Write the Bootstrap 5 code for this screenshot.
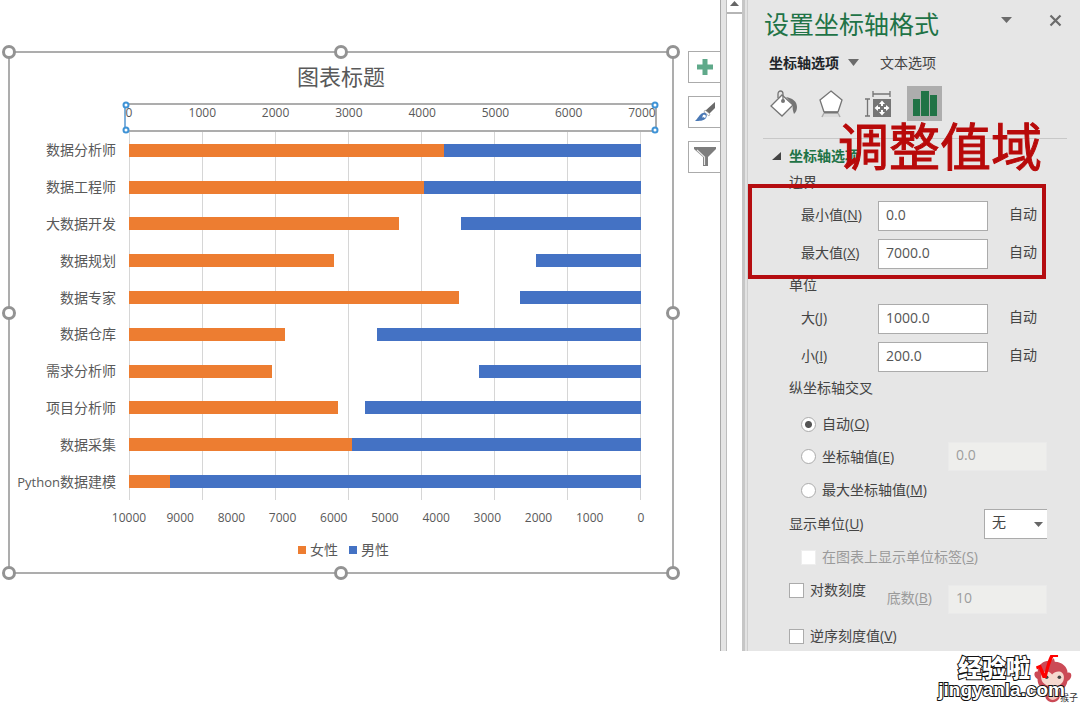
<!DOCTYPE html>
<html lang="zh-CN">
<head>
<meta charset="utf-8">
<meta name="viewport" content="width=device-width, initial-scale=1">
<title>设置坐标轴格式</title>
<link href="https://cdn.jsdelivr.net/npm/bootstrap@5.3.0/dist/css/bootstrap.min.css" rel="stylesheet">
<style>
  body { font-family: "Open Sans", "Noto Sans CJK SC", sans-serif; font-size: 14px; line-height: 20px; color: #444; background: #fff; }
  .workspace { min-height: calc(100vh - 55px); }

  /* chart */
  .sheet { padding: 51px 0 0 8px; gap: 14px; min-width: 0; }
  .chart-frame { border: 2px solid #adadad; padding: 10px 0 13px; color: #595959; }
  .chart-name { font-size: 22px; line-height: 26px; font-weight: 400; margin: 0 0 14px; color: #595959; }
  .grips { inset: -1px; pointer-events: none; }
  .grip { width: 14px; height: 14px; border: 3px solid #939393; border-radius: 50%; background: #fff; }
  .value-axis { margin: 0 15px 0 114px; height: 29px; border: 2px solid #adadad; border-left-color: #7fb0dc; padding: 0 13px 0 3px; }
  .dot { width: 7px; height: 7px; border: 2px solid #3f93d6; border-radius: 50%; background: #fff; }
  .ticks { font-size: 12px; line-height: 16px; }
  .ticks span { width: 0; display: flex; justify-content: center; white-space: nowrap; }
  .plot { display: grid; grid-template-columns: 119px 1fr; grid-template-rows: 368px; padding-right: 31px; }
  .names, .series { display: grid; grid-template-rows: repeat(10, 1fr); align-items: center; }
  .names { padding-right: 13px; text-align: right; white-space: nowrap; }
  .latin { font-size: 13px; }
  .lines, .series { grid-column: 2; grid-row: 1; }
  .lines i { width: 1px; background: #d6d6d6; }
  .bar-a, .bar-b { height: 13px; }
  .bar-a, .key-a { background: #ed7d31; }
  .bar-b, .key-b { background: #4472c4; }
  .lower-axis { margin: 10px 31px 0 119px; }
  .legend-row { margin-top: 15px; gap: 11px; line-height: 18px; padding-left: 5px; }
  .key { width: 8px; height: 8px; }
  .tools { gap: 13px; }
  .tool { width: 32px; height: 32px; border: 1px solid #ababab; border-right: 0; background: #fff; padding: 0; display: flex; align-items: center; justify-content: center; }

  /* splitter and scroll bar */
  .splitter { width: 7px; background: #e4e4e4; border-left: 1px solid #a8a8a8; border-right: 1px solid #bdbdbd; }
  .scroller { width: 15px; background: #fff; }
  .scroll-up { width: 15px; height: 14px; border: 0; border-bottom: 2px solid #b5b5b5; background: #fff; padding: 0; display: flex; justify-content: center; }
  .pane-edge { width: 6px; background: #e2e2e2; border-left: 3px solid #c6c6c6; border-right: 1px solid #cdcdcd; }

  /* format pane */
  .pane { flex: 0 0 332px; background: #e6e6e6; }
  .pane-head { height: 48px; padding: 0 18px 0 16px; gap: 37px; }
  .pane-head h1 { font-size: 25px; line-height: 34px; color: #217346; font-weight: 400; margin: 0; }
  .bare { border: 0; background: none; padding: 0; color: inherit; line-height: 20px; }
  .tabs { padding: 3px 0 0 21px; height: 26px; gap: 9px; }
  .tabs .other { margin-left: 12px; }
  .kinds { padding: 12px 0 0 18px; gap: 12px; }
  .kind { width: 35px; height: 35px; border: 0; padding: 0; background: none; display: flex; align-items: center; justify-content: center; }
  .kind.on { background: #adadad; }
  .rule { height: 1px; background: #c8c8c8; margin: 17px 13px 0 15px; }
  .fold { color: #217346; font-weight: 700; margin: 7px 0 0 24px; gap: 8px; }
  .group-name { margin: 6px 0 0 41px; }
  .pair { display: grid; grid-template-columns: 77px 110px auto; align-items: center; margin-left: 53px; }
  .pair label { padding-bottom: 2px; }
  .pair .bare { margin-left: 21px; padding-bottom: 4px; justify-self: start; }
  .field { width: 110px; height: 30px; border: 1px solid #ababab; border-radius: 0; padding: 0 7px 4px; font-size: 14px; line-height: 20px; color: #555; background: #fff; }
  .field:disabled { width: 99px; height: 29px; border-color: #eaeaea; background: #eeeeec; color: #9d9d9d; }
  .fields { display: grid; row-gap: 8px; margin-top: 9px; }
  .mark-box { left: 0; right: 34px; top: -17px; bottom: -10px; border: 4px solid #b50d10; pointer-events: none; }
  .note { left: 90px; top: -30px; font-size: 51px; line-height: 60px; color: #b80a0a; -webkit-text-stroke: 1px #b80a0a; white-space: nowrap; pointer-events: none; }
  .choice { display: flex; align-items: center; gap: 6px; height: 20px; }
  .choice .form-check-input { width: 15px; height: 15px; margin: 0; border: 1px solid #ababab; background-color: #fff; flex: none; }
  .choice .form-check-input[type=checkbox] { border-radius: 0; }
  .choice .form-check-input[type=radio]:checked { background-image: radial-gradient(circle, #555 0 3px, transparent 4px); }
  .choice .form-check-input:disabled { border-color: #eee; opacity: 1; }
  .choice .form-check-input:disabled ~ label { opacity: 1; color: #9a9a9a; }
  .line { display: flex; align-items: center; justify-content: space-between; padding-right: 33px; margin-top: 9px; }
  .in-1 { padding-left: 41px; }
  .in-2 { padding-left: 53px; }
  .base-field { padding-top: 5px; }
  .base-field label { padding-bottom: 3px; }
  .unit-select { width: 63px; height: 30px; border: 1px solid #ababab; border-right: 0; border-radius: 0; font-size: 14px; line-height: 20px; padding: 0 8px 4px 7px; color: #444; background-position: right 4px center; background-size: 9px 5px;
    background-image: url("data:image/svg+xml,%3Csvg xmlns='http://www.w3.org/2000/svg' viewBox='0 0 9 5'%3E%3Cpath d='M0 0h9L4.500 5z' fill='%23666'/%3E%3C/svg%3E"); }
  .dim { color: #9a9a9a; }

  /* site mark */
  .site { height: 55px; padding: 4px 3px 0 0; }
  .site-name { font-weight: 700; color: #fff; -webkit-text-stroke: 2px #111; paint-order: stroke fill; z-index: 1; padding-right: 12px; }
  .site-name .zh { font-size: 24px; line-height: 26px; font-weight: 900; padding-right: 35px; }
  .site-name .en { font-family: "Liberation Sans", sans-serif; font-size: 19px; line-height: 17px; }
  .mascot { right: 7px; top: 5px; }
  .tick-mark { right: 21px; top: 4px; z-index: 2; }
  .mascot-name { right: 2px; top: 42px; font-size: 9px; line-height: 10px; color: #333; }
</style>
</head>
<body>
<main class="workspace d-flex">
  <section class="sheet d-flex flex-grow-1 align-items-start">
    <div class="chart-frame position-relative flex-grow-1">
      <h2 class="chart-name text-center">图表标题</h2>
      <div class="value-axis position-relative">
        <div class="ticks d-flex justify-content-between"><span>0</span><span>1000</span><span>2000</span><span>3000</span><span>4000</span><span>5000</span><span>6000</span><span>7000</span></div>
        <b class="dot position-absolute top-0 start-0 translate-middle"></b>
        <b class="dot position-absolute top-0 start-100 translate-middle"></b>
        <b class="dot position-absolute top-100 start-0 translate-middle"></b>
        <b class="dot position-absolute top-100 start-100 translate-middle"></b>
      </div>
      <div class="plot">
        <div class="names">
          <span>数据分析师</span><span>数据工程师</span><span>大数据开发</span><span>数据规划</span><span>数据专家</span><span>数据仓库</span><span>需求分析师</span><span>项目分析师</span><span>数据采集</span><span><span class="latin">Python</span>数据建模</span>
        </div>
        <div class="lines d-flex justify-content-between"><i></i><i></i><i></i><i></i><i></i><i></i><i></i><i></i></div>
        <div class="series">
          <div class="d-flex justify-content-between"><div class="bar-a" style="width:61.5%"></div><div class="bar-b" style="width:38.5%"></div></div>
          <div class="d-flex justify-content-between"><div class="bar-a" style="width:57.6%"></div><div class="bar-b" style="width:42.4%"></div></div>
          <div class="d-flex justify-content-between"><div class="bar-a" style="width:52.8%"></div><div class="bar-b" style="width:35.1%"></div></div>
          <div class="d-flex justify-content-between"><div class="bar-a" style="width:40.1%"></div><div class="bar-b" style="width:20.6%"></div></div>
          <div class="d-flex justify-content-between"><div class="bar-a" style="width:64.5%"></div><div class="bar-b" style="width:23.6%"></div></div>
          <div class="d-flex justify-content-between"><div class="bar-a" style="width:30.5%"></div><div class="bar-b" style="width:51.6%"></div></div>
          <div class="d-flex justify-content-between"><div class="bar-a" style="width:28%"></div><div class="bar-b" style="width:31.6%"></div></div>
          <div class="d-flex justify-content-between"><div class="bar-a" style="width:40.8%"></div><div class="bar-b" style="width:53.9%"></div></div>
          <div class="d-flex justify-content-between"><div class="bar-a" style="width:43.6%"></div><div class="bar-b" style="width:56.4%"></div></div>
          <div class="d-flex justify-content-between"><div class="bar-a" style="width:8.1%"></div><div class="bar-b" style="width:91.9%"></div></div>
        </div>
      </div>
      <div class="lower-axis ticks d-flex justify-content-between"><span>10000</span><span>9000</span><span>8000</span><span>7000</span><span>6000</span><span>5000</span><span>4000</span><span>3000</span><span>2000</span><span>1000</span><span>0</span></div>
      <div class="legend-row d-flex justify-content-center">
        <span class="d-flex align-items-center gap-1"><i class="key key-a"></i>女性</span>
        <span class="d-flex align-items-center gap-1"><i class="key key-b"></i>男性</span>
      </div>
      <div class="grips position-absolute">
        <b class="grip position-absolute top-0 start-0 translate-middle"></b>
        <b class="grip position-absolute top-0 start-50 translate-middle"></b>
        <b class="grip position-absolute top-0 start-100 translate-middle"></b>
        <b class="grip position-absolute top-50 start-0 translate-middle"></b>
        <b class="grip position-absolute top-50 start-100 translate-middle"></b>
        <b class="grip position-absolute top-100 start-0 translate-middle"></b>
        <b class="grip position-absolute top-100 start-50 translate-middle"></b>
        <b class="grip position-absolute top-100 start-100 translate-middle"></b>
      </div>
    </div>
    <div class="tools d-flex flex-column">
      <button class="tool" type="button" aria-label="图表元素"><svg width="18" height="18" viewBox="0 0 18 18"><path d="M6.500 1h5v5.500H17v5h-5.500V17h-5v-5.500H1v-5h5.500z" fill="#5fa98a"/></svg></button>
      <button class="tool" type="button" aria-label="图表样式"><svg width="22" height="22" viewBox="0 0 22 22"><path d="M21 1v6l-6 6-4-3z" fill="#6b6b6b"/><path d="M11 9l5 4-1 2-5-4z" fill="#fff" stroke="#8a8a8a" stroke-width=".6"/><path d="M9 12c3-1 5 2 3 5-2 3-7 3-11 3 3-2 4-7 8-8z" fill="#4a78b5"/><path d="M9 14c2-1 4 1 2 3l-2-1-1 1z" fill="#fff"/></svg></button>
      <button class="tool" type="button" aria-label="图表筛选器"><svg width="22" height="20" viewBox="0 0 22 20"><path d="M0 0h22v2l-8 8v9H9v-9L0 2z" fill="#7d7d7d"/><path d="M3 3l7.500 7v8" fill="none" stroke="#e8e8e8" stroke-width="1.200"/></svg></button>
    </div>
  </section>
  <div class="splitter"></div>
  <div class="scroller">
    <button class="scroll-up" type="button" aria-label="向上滚动"><svg width="9" height="6" viewBox="0 0 9 6"><path d="M0 6L4.500 1 9 6z" fill="#666"/></svg></button>
  </div>
  <div class="pane-edge"></div>

  <form class="pane">
    <header class="pane-head d-flex align-items-center">
      <h1 class="me-auto">设置坐标轴格式</h1>
      <button class="bare d-flex mb-2" type="button" aria-label="窗格选项"><svg width="11" height="6" viewBox="0 0 11 6"><path d="M0 0h11L5.500 6z" fill="#6b6b6b"/></svg></button>
      <button class="bare d-flex mb-2" type="button" aria-label="关闭"><svg width="13" height="13" viewBox="0 0 13 13"><path d="M1.500 1.500l10 10m0-10l-10 10" stroke="#6b6b6b" stroke-width="2.200"/></svg></button>
    </header>
    <div class="tabs d-flex align-items-center">
      <button class="bare fw-bold text-dark" type="button">坐标轴选项</button>
      <svg width="11" height="7" viewBox="0 0 11 7"><path d="M0 0h11L5.500 7z" fill="#6b6b6b"/></svg>
      <button class="bare other" type="button">文本选项</button>
    </div>
    <div class="kinds d-flex">
      <button class="kind" type="button" aria-label="填充与线条"><svg width="30" height="28" viewBox="0 0 30 28"><path d="M2 16L13 5l11 10-11 11z" fill="#fff" stroke="#757575" stroke-width="1.300"/><path d="M17 7c6 1 11 4 11 10 0 3-1 5-3 7-1-3-2-6-1-9z" fill="#757575"/><path d="M9 8V4c0-4 5-4 5 0v6" fill="none" stroke="#757575" stroke-width="1.300"/><circle cx="14" cy="11" r="2" fill="#757575"/></svg></button>
      <button class="kind" type="button" aria-label="效果"><svg width="26" height="28" viewBox="0 0 26 28"><path d="M13 1l11 9-4 12H6L2 10z" fill="#fff" stroke="#757575" stroke-width="1.300"/><path d="M6 22h14l3 5H3z" fill="#dcdcdc"/><path d="M6 22.500h14" stroke="#757575" stroke-width="2"/><path d="M6 23l-2 4M20 23l2 4" stroke="#aaa" stroke-width="1.300"/></svg></button>
      <button class="kind" type="button" aria-label="大小与属性"><svg width="26" height="26" viewBox="0 0 26 26"><path d="M8 8h18v18H8z" fill="#757575"/><path d="M8 3h17M8 0v6M25 0v6M2.500 8v17M0 8h5M0 25h5" stroke="#757575" stroke-width="1.300" fill="none"/><path d="M17 9.500l3 3.500h-6zM17 24.500l3-3.500h-6zM9.500 17l3.500-3v6zM24.500 17L21 14v6z" fill="#fff"/><path d="M17 13v2m0 4v2m-4-4h2m4 0h2" stroke="#fff" stroke-width="2"/></svg></button>
      <button class="kind on" type="button" aria-label="坐标轴选项"><svg width="24" height="25" viewBox="0 0 24 25"><path d="M0 8h7v17H0zM8 0h8v25H8zM17 4h7v21h-7z" fill="#217346"/></svg></button>
    </div>
    <div class="rule"></div>

    <div class="position-relative">
      <button class="bare fold d-flex align-items-center" type="button"><svg width="9" height="8" viewBox="0 0 9 8"><path d="M9 0v8H0z" fill="#444"/></svg>坐标轴选项</button>
      <div class="note position-absolute">调整值域</div>
    </div>
    <div class="group-name">边界</div>
    <div class="fields position-relative">
      <div class="pair"><label for="min">最小值(<u>N</u>)</label><input class="field" id="min" value="0.0"><button class="bare" type="button">自动</button></div>
      <div class="pair"><label for="max">最大值(<u>X</u>)</label><input class="field" id="max" value="7000.0"><button class="bare" type="button">自动</button></div>
      <div class="mark-box position-absolute"></div>
    </div>
    <div class="group-name">单位</div>
    <div class="fields">
      <div class="pair"><label for="major">大(<u>J</u>)</label><input class="field" id="major" value="1000.0"><button class="bare" type="button">自动</button></div>
      <div class="pair"><label for="minor">小(<u>I</u>)</label><input class="field" id="minor" value="200.0"><button class="bare" type="button">自动</button></div>
    </div>
    <div class="group-name">纵坐标轴交叉</div>
    <div class="line in-2 mt-3"><div class="choice"><input class="form-check-input" type="radio" name="cross" id="c1" checked><label for="c1">自动(<u>O</u>)</label></div></div>
    <div class="line in-2 mt-2"><div class="choice"><input class="form-check-input" type="radio" name="cross" id="c2"><label for="c2">坐标轴值(<u>E</u>)</label></div><input class="field" aria-label="坐标轴值" value="0.0" disabled></div>
    <div class="line in-2"><div class="choice"><input class="form-check-input" type="radio" name="cross" id="c3"><label for="c3">最大坐标轴值(<u>M</u>)</label></div></div>
    <div class="line in-1"><label for="unit">显示单位(<u>U</u>)</label><select class="form-select unit-select" id="unit"><option>无</option></select></div>
    <div class="line in-2 mt-2"><div class="choice"><input class="form-check-input" type="checkbox" id="k1" disabled><label for="k1">在图表上显示单位标签(<u>S</u>)</label></div></div>
    <div class="line in-1 align-items-start pt-1"><div class="choice"><input class="form-check-input" type="checkbox" id="k2"><label for="k2">对数刻度</label></div><div class="base-field d-flex align-items-center"><label class="dim me-3" for="base">底数(<u>B</u>)</label><input class="field" id="base" value="10" disabled></div></div>
    <div class="line in-1 pt-1 mt-2"><div class="choice"><input class="form-check-input" type="checkbox" id="k3"><label for="k3">逆序刻度值(<u>V</u>)</label></div></div>
  </form>
</main>
<footer class="site position-relative d-flex justify-content-end">
  <svg class="mascot position-absolute" width="40" height="48" viewBox="0 0 44 50"><path d="M5 24C-1 20 2 14 5 16 6 7 13 3 19 4l4-3 1 4c8 0 14 6 14 12 5-2 6 6 0 9-1 5-3 8-7 10l-2 9c-3 6-12 6-15 0l-2-9c-5-3-7-7-7-12z" fill="#cb4a56"/><path d="M9 22c0-8 9-8 12-3 4-5 13-5 13 3 0 6-4 10-12 10S9 28 9 22z" fill="#f6d9cf"/><circle cx="15" cy="22" r="2" fill="#444"/><circle cx="29" cy="22" r="2" fill="#444"/><path d="M14 34h16l-3 10c-3 4-8 4-10 0z" fill="#f3c4bd"/></svg>
  <div class="site-name position-relative d-flex flex-column align-items-end">
    <span class="zh">经验啦</span>
    <span class="en">jingyanla.com</span>
  </div>
  <svg class="tick-mark position-absolute" width="24" height="24" viewBox="0 0 25 25"><path d="M1 12l5-2 4 9C12 10 14 4 16 0h8v2h-5c-3 6-5 13-7 22H8L4 14l-2 1z" fill="#f00"/></svg>
  <span class="mascot-name position-absolute">猴子</span>
</footer>
<script src="https://cdn.jsdelivr.net/npm/bootstrap@5.3.0/dist/js/bootstrap.bundle.min.js"></script>
</body>
</html>
